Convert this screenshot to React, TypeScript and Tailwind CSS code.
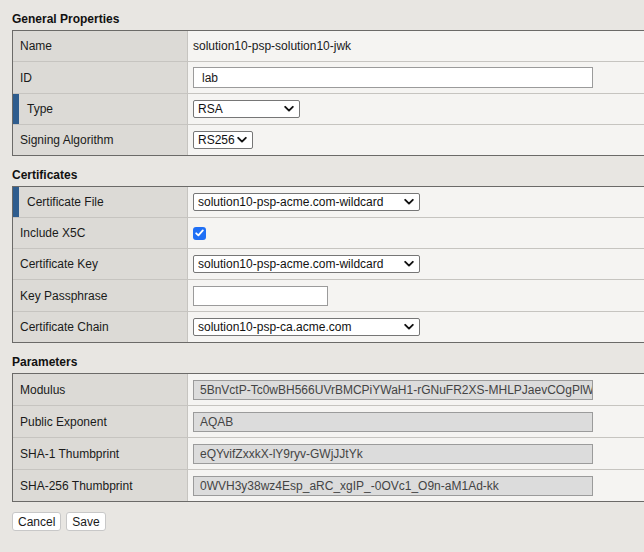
import type { ReactNode } from 'react';

const font = { fontFamily: '"Liberation Sans", Arial, sans-serif' };

function Chevron() {
  return (
    <svg width="10" height="7" viewBox="0 0 10 7" className="absolute right-[6px] top-1/2 -translate-y-1/2 pointer-events-none">
      <path d="M1.2 1.3 L5 5.1 L8.8 1.3" fill="none" stroke="#111" strokeWidth="1.9" strokeLinecap="round" strokeLinejoin="round" />
    </svg>
  );
}

function Select({ value, width }: { value: string; width: string }) {
  return (
    <div className={`relative h-[18px] ${width}`}>
      <select
        defaultValue={value}
        className="appearance-none w-full h-full bg-white border border-[#767676] rounded-[2px] pl-[4px] pr-[16px] text-[12px] leading-[16px] text-[#111] outline-none"
        style={font}
      >
        <option>{value}</option>
      </select>
      <Chevron />
    </div>
  );
}

// row height includes its bottom separator
function Row({ label, children, marked, h = 'h-[31px]', last }: { label: string; children: ReactNode; marked?: boolean; h?: string; last?: boolean }) {
  return (
    <div className={`flex ${h} ${last ? '' : 'border-b border-[#c6c4c0]'}`}>
      <div className="w-[175px] flex items-center bg-[#dcdad6] border-r border-[#c6c4c0] shrink-0">
        {marked && <div className="w-[6px] self-stretch bg-[#2f5d8e]" />}
        <span className={marked ? 'pl-[8px]' : 'pl-[7px]'}>{label}</span>
      </div>
      <div className="flex-1 flex items-center pl-[5px] bg-[#f5f4f2]">{children}</div>
    </div>
  );
}

function Section({ title, children }: { title: string; children: ReactNode }) {
  return (
    <div>
      <div className="pt-[12px] pb-[3px] leading-[15px] font-bold text-[12px] text-[#111]">{title}</div>
      <div className="w-[660px] border-t border-l border-b border-[#6b6a68]">{children}</div>
    </div>
  );
}

function ReadOnly({ value }: { value: string }) {
  return (
    <div className="w-[400px] h-[20px] bg-[#dcdcdc] border border-[#9b9b9b] pl-[6px] flex items-center text-[12px] text-[#444] overflow-hidden whitespace-nowrap">
      {value}
    </div>
  );
}

export default function App() {
  return (
    <div className="w-[644px] h-[552px] bg-[#e8e6e2] overflow-hidden pl-[12px] text-[12px] text-[#1a1a1a]" style={font}>
      <Section title="General Properties">
        <Row label="Name">solution10-psp-solution10-jwk</Row>
        <Row label="ID" h="h-[32px]">
          <div className="w-[400px] h-[21px] bg-white border border-[#9b9b9b] pl-[8px] flex items-center">lab</div>
        </Row>
        <Row label="Type" marked>
          <Select value="RSA" width="w-[107px]" />
        </Row>
        <Row label="Signing Algorithm" h="h-[30px]" last>
          <Select value="RS256" width="w-[60px]" />
        </Row>
      </Section>

      <Section title="Certificates">
        <Row label="Certificate File" marked>
          <Select value="solution10-psp-acme.com-wildcard" width="w-[227px]" />
        </Row>
        <Row label="Include X5C">
          <span className="w-[13px] h-[13px] rounded-[3px] bg-[#1f6ff5] flex items-center justify-center">
            <svg width="9" height="8" viewBox="0 0 9 8">
              <path d="M1.2 4.3 L3.4 6.4 L7.8 1.4" fill="none" stroke="white" strokeWidth="1.8" strokeLinecap="round" strokeLinejoin="round" />
            </svg>
          </span>
        </Row>
        <Row label="Certificate Key">
          <Select value="solution10-psp-acme.com-wildcard" width="w-[227px]" />
        </Row>
        <Row label="Key Passphrase" h="h-[32px]">
          <div className="w-[135px] h-[20px] bg-white border border-[#9b9b9b]" />
        </Row>
        <Row label="Certificate Chain" h="h-[30px]" last>
          <Select value="solution10-psp-ca.acme.com" width="w-[227px]" />
        </Row>
      </Section>

      <Section title="Parameters">
        <Row label="Modulus" h="h-[32px]">
          <ReadOnly value="5BnVctP-Tc0wBH566UVrBMCPiYWaH1-rGNuFR2XS-MHLPJaevCOgPlW" />
        </Row>
        <Row label="Public Exponent" h="h-[32px]">
          <ReadOnly value="AQAB" />
        </Row>
        <Row label="SHA-1 Thumbprint" h="h-[32px]">
          <ReadOnly value="eQYvifZxxkX-lY9ryv-GWjJJtYk" />
        </Row>
        <Row label="SHA-256 Thumbprint" h="h-[31px]" last>
          <ReadOnly value="0WVH3y38wz4Esp_aRC_xgIP_-0OVc1_O9n-aM1Ad-kk" />
        </Row>
      </Section>

      <div className="flex gap-[5px] mt-[10px]">
        <button className="h-[19px] px-[5px] bg-white border border-[#c8c8c8] rounded-[3px] text-[12px] leading-none">Cancel</button>
        <button className="h-[19px] px-[5px] bg-white border border-[#c8c8c8] rounded-[3px] text-[12px] leading-none">Save</button>
      </div>
    </div>
  );
}
